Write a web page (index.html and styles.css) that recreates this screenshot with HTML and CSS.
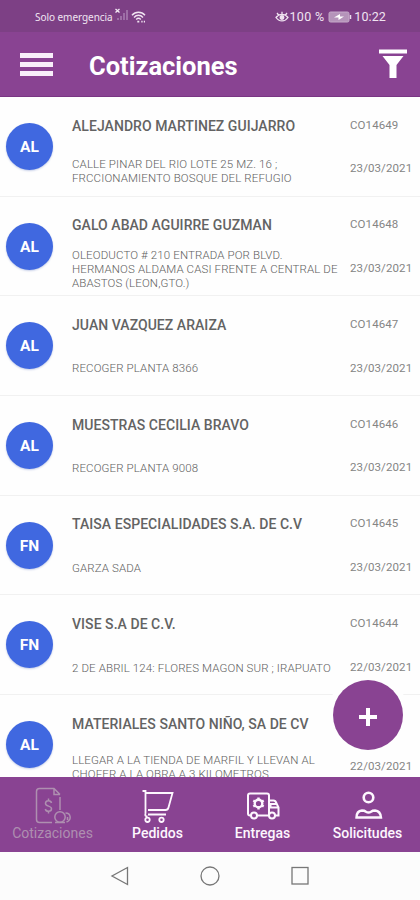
FILE: index.html
```html
<!DOCTYPE html>
<html lang="es">
<head>
    <meta charset="UTF-8">
    <meta name="viewport" content="width=device-width, initial-scale=1.0">
    <title>Cotizaciones</title>
    <link rel="stylesheet" href="styles.css">
</head>
<body>

    <div class="status-bar">
        <span class="carrier">Solo emergencia</span>
        <svg class="signal" width="15" height="14" viewBox="0 0 15 14">
            <path d="M0.5 1l4 3.5M4.5 1l-4 3.5" stroke="#f4eaf5" stroke-width="1.3"/>
            <path d="M3 12v-2M6 12V8M9 12V5M12 12V2" stroke="#a77bae" stroke-width="1.6"/>
        </svg>
        <svg class="wifi" width="16" height="14" viewBox="0 0 16 14" fill="none" stroke="#f0e4f1" stroke-width="1.4">
            <path d="M1 5.2C4.5 1.2 10.5 1.2 14 5.2M3 7.4c2.6-2.8 6.4-2.8 9 0M5.2 9.5c1.4-1.4 3.2-1.4 4.6 0"/>
            <path d="M6.3 11.6h2M10.3 11.6h1.3M12.8 11.6H14" stroke-width="1.7"/>
        </svg>
        <div class="status-right">
            <svg class="eye" width="14" height="12" viewBox="0 0 14 12" fill="none" stroke="#f0e4f1" stroke-width="1.3">
                <path d="M1 6.5c3-4.2 9-4.2 12 0-3 4.5-9 4.5-12 0zM7 3V.8M3.5 4L2 2M10.5 4L12 2"/>
                <circle cx="7" cy="6.5" r="1.8" fill="#f0e4f1"/>
            </svg>
            <span class="percent">100 %</span>
            <svg class="battery" width="24" height="12" viewBox="0 0 24 12">
                <rect x="1" y="1" width="20" height="10" rx="1.5" fill="#b594ba" stroke="#c5a9c9"/>
                <path d="M22.5 4v4" stroke="#eadbec" stroke-width="1.5"/>
                <path d="M6 6.5L12 3v2.4h4L10.5 9V6.5z" fill="#fff"/>
            </svg>
            <span class="clock">10:22</span>
        </div>
    </div>

    <header class="app-bar">
        <div class="menu">
            <span></span>
            <span></span>
            <span></span>
        </div>
        <h1>Cotizaciones</h1>
        <svg class="filter" width="30" height="30" viewBox="0 0 30 30" fill="#fff">
            <rect x="1" y="0.5" width="28" height="4"/>
            <path d="M4.5 7h21L18.5 16v13h-7V16z"/>
        </svg>
    </header>

    <main class="list">
        <div class="row">
            <div class="avatar">AL</div>
            <div class="info">
                <h2>ALEJANDRO MARTINEZ GUIJARRO</h2>
                <p>CALLE PINAR DEL RIO LOTE 25 MZ. 16 ;<br>FRCCIONAMIENTO BOSQUE DEL REFUGIO</p>
            </div>
            <div class="meta"><span class="code">CO14649</span><span class="date">23/03/2021</span></div>
        </div>
        <div class="row">
            <div class="avatar">AL</div>
            <div class="info">
                <h2>GALO ABAD AGUIRRE GUZMAN</h2>
                <p>OLEODUCTO # 210 ENTRADA POR BLVD.<br>HERMANOS ALDAMA CASI FRENTE A CENTRAL DE<br>ABASTOS (LEON,GTO.)</p>
            </div>
            <div class="meta"><span class="code">CO14648</span><span class="date">23/03/2021</span></div>
        </div>
        <div class="row">
            <div class="avatar">AL</div>
            <div class="info">
                <h2>JUAN VAZQUEZ ARAIZA</h2>
                <p>RECOGER PLANTA 8366</p>
            </div>
            <div class="meta"><span class="code">CO14647</span><span class="date">23/03/2021</span></div>
        </div>
        <div class="row">
            <div class="avatar">AL</div>
            <div class="info">
                <h2>MUESTRAS CECILIA BRAVO</h2>
                <p>RECOGER PLANTA 9008</p>
            </div>
            <div class="meta"><span class="code">CO14646</span><span class="date">23/03/2021</span></div>
        </div>
        <div class="row">
            <div class="avatar">FN</div>
            <div class="info">
                <h2>TAISA ESPECIALIDADES S.A. DE C.V</h2>
                <p>GARZA SADA</p>
            </div>
            <div class="meta"><span class="code">CO14645</span><span class="date">23/03/2021</span></div>
        </div>
        <div class="row">
            <div class="avatar">FN</div>
            <div class="info">
                <h2>VISE S.A DE C.V.</h2>
                <p>2 DE ABRIL 124: FLORES MAGON SUR ; IRAPUATO</p>
            </div>
            <div class="meta"><span class="code">CO14644</span><span class="date">22/03/2021</span></div>
        </div>
        <div class="row">
            <div class="avatar">AL</div>
            <div class="info">
                <h2>MATERIALES SANTO NIÑO, SA DE CV</h2>
                <p>LLEGAR A LA TIENDA DE MARFIL Y LLEVAN AL<br>CHOFER A LA OBRA A 3 KILOMETROS</p>
            </div>
            <div class="meta"><span class="date">22/03/2021</span></div>
        </div>
        <div class="fab">
            <svg width="18" height="18" viewBox="0 0 18 18"><path d="M9 0v18M0 9h18" stroke="#fff" stroke-width="4"/></svg>
        </div>
    </main>

    <nav class="tabs">
        <div class="tab active">
            <svg width="36" height="38" viewBox="0 0 36 38" fill="none" stroke="currentColor" stroke-width="1.5">
                <path d="M17 35.500H4.500q-3 0-3-3V4.500q0-3 3-3H19l6 6M25 10v13M19 1.500v6h6"/>
                <path d="M16.500 16c-.6-3-6-3-6 .5 0 3.300 6 2 6 5.200s-5.500 3.500-6.200.3M13.500 11.500v2.500M13.500 24v2.500"/>
                <circle cx="25" cy="30" r="5.200"/>
                <path d="M20 35.500h10M30.500 26c5.500 0 6.500 7 1 9M32.500 30v3"/>
            </svg>
            <span>Cotizaciones</span>
        </div>
        <div class="tab">
            <svg width="36" height="38" viewBox="0 0 36 38" fill="none" stroke="currentColor" stroke-width="1.8">
                <path d="M2.500 4H5.500v22.500M5.500 6H32.500l-4 14.500q-.6 2.500-3 2.500H8M8 27.500h18M5.500 26.500q-1 3 2 3"/>
                <circle cx="7.5" cy="32.8" r="2.2"/>
                <circle cx="21.5" cy="32.8" r="2.2"/>
            </svg>
            <span>Pedidos</span>
        </div>
        <div class="tab">
            <svg width="36" height="38" viewBox="0 0 36 38" fill="none" stroke="currentColor" stroke-width="2">
                <path d="M6 28.5H5q-2 0-2-2V8.500q0-2 2-2h17q2 0 2 2v20M12 28.500h12M24 13.500h4.500q2 0 2.800 2.500l2.200 4.500v8h-3.500M33 20.500h-7.500V17h6"/>
                <circle cx="9" cy="28.5" r="3"/>
                <circle cx="27" cy="28.5" r="3"/>
                <circle cx="13.5" cy="16.5" r="3.8" stroke-width="2.4"/>
                <path d="M13.500 10.500v2.500M13.500 20v2.500M8.300 13.500l2.200 1.300M16.500 18.200l2.200 1.300M8.300 19.500l2.200-1.300M16.500 14.800l2.200-1.300" stroke-width="2.4"/>
            </svg>
            <span>Entregas</span>
        </div>
        <div class="tab">
            <svg width="36" height="38" viewBox="0 0 36 38" fill="none" stroke="currentColor" stroke-width="2.6">
                <circle cx="18.5" cy="10.5" r="4.8"/>
                <path d="M6.500 30.500q0-6.500 5.500-7 2.500 0 4 1.200 2.500 1.500 5 0 1.500-1.200 4-1.200 5.500.5 6 7z" stroke-width="2.4"/>
            </svg>
            <span>Solicitudes</span>
        </div>
    </nav>

    <footer class="system-nav">
        <svg width="20" height="22" viewBox="0 0 20 22"><path d="M17.5 2.5v17L2 11z"/></svg>
        <svg width="22" height="22" viewBox="0 0 22 22"><circle cx="11" cy="11" r="9"/></svg>
        <svg width="20" height="22" viewBox="0 0 20 22"><rect x="2" y="2.5" width="16" height="16.5"/></svg>
    </footer>

</body>
</html>
```

FILE: styles.css
```css
* {
    box-sizing: border-box;
}
body {
    margin: 0;
    width: 420px;
    height: 900px;
    display: flex;
    flex-direction: column;
    overflow: hidden;
    font-family: Roboto, sans-serif;
    background-color: #fefefe;
}
.status-bar {
    height: 32px;
    flex: none;
    display: flex;
    align-items: center;
    padding: 1px 34px 0 35px;
    background-color: #7d4085;
    color: #f0e4f1;
}
.carrier {
    width: 79px;
    font-family: "Noto Sans", sans-serif;
    font-size: 10px;
    letter-spacing: -0.05px;
    white-space: nowrap;
}
.signal {
    margin: -3px 0 0 1px;
}
.wifi {
    margin-left: 1px;
}
.status-right {
    margin-left: auto;
    display: flex;
    align-items: center;
    font-size: 12.5px;
}
.eye {
    margin-right: -1px;
}
.percent {
    margin: 0 4px 0 2px;
    letter-spacing: 0.3px;
}
.clock {
    margin-left: 2px;
    letter-spacing: 0.1px;
}
.app-bar {
    height: 65px;
    flex: none;
    display: flex;
    align-items: center;
    padding: 0 12px 0 20px;
    background-color: #894392;
    border-bottom: 1px solid #793683;
}
.menu {
    width: 33px;
    display: flex;
    flex-direction: column;
    gap: 4px;
}
.menu span {
    height: 5px;
    background-color: #f8effa;
}
h1 {
    margin: 4px 0 0 36px;
    font-size: 25.5px;
    font-weight: 700;
    line-height: 30px;
    color: #fff;
}
.filter {
    margin-left: auto;
}
.list {
    position: relative;
    height: 680px;
    flex: none;
    overflow: hidden;
}
.row {
    height: 99.7px;
    display: flex;
    border-bottom: 1px solid #f1f1f1;
}
.avatar {
    width: 47px;
    height: 47px;
    flex: none;
    margin: 26px 0 0 6px;
    border-radius: 50%;
    background-color: #4068e0;
    box-shadow: 0 1px 2px #c5cee8;
    color: #fff;
    font-size: 15.5px;
    font-weight: 700;
    line-height: 49px;
    text-align: center;
}
.info {
    width: 278px;
    flex: none;
    padding: 18.5px 0 0 19px;
}
h2 {
    margin: 0;
    font-size: 14px;
    font-weight: 500;
    line-height: 20px;
    letter-spacing: 0.05px;
    color: #636363;
    white-space: nowrap;
}
.info p {
    height: 42px;
    margin: 13.5px 0 0;
    align-content: center;
    font-size: 11.5px;
    line-height: 13.8px;
    letter-spacing: 0.12px;
    font-weight: 300;
    color: #606060;
    white-space: nowrap;
}
.row:nth-child(1) p {
    margin-top: 15px;
}
.meta {
    display: flex;
    flex-direction: column;
    padding: 18.5px 0 0 19px;
    font-size: 11.5px;
    line-height: 18px;
    letter-spacing: 0.1px;
    color: #858585;
}
.date {
    margin-top: auto;
    margin-bottom: 18.5px;
}
.fab {
    position: absolute;
    left: 333px;
    top: 583px;
    width: 70px;
    height: 70px;
    border-radius: 50%;
    background-color: #894392;
    box-shadow: 0 0 0 6px #fefefe;
    display: flex;
    align-items: center;
    justify-content: center;
}
.fab svg {
    margin-top: 4px;
}
.tabs {
    height: 75px;
    flex: none;
    display: grid;
    grid-template-columns: repeat(4, 1fr);
    background-color: #894392;
    color: #fdf6fe;
}
.tab {
    display: flex;
    flex-direction: column;
    align-items: center;
    padding-top: 10px;
    font-size: 14px;
    font-weight: 500;
    line-height: 17px;
}
.tab.active {
    color: #ae8fb0;
    font-weight: 400;
}
.system-nav {
    flex: 1;
    display: flex;
    align-items: center;
    justify-content: center;
    gap: 69px;
    background-color: #fcfcfc;
}
.system-nav svg {
    fill: none;
    stroke: #777;
    stroke-width: 1.3;
}
```
